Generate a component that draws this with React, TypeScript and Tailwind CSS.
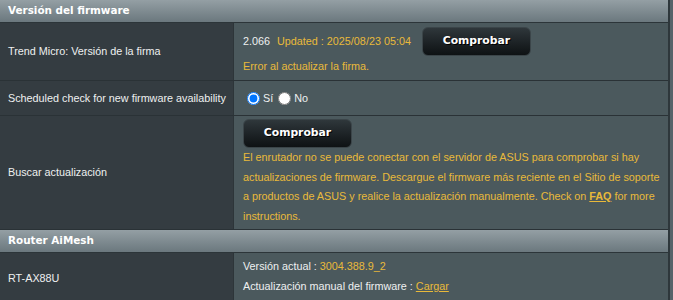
import React from 'react';

const body = "font-['Liberation_Sans',Arial,sans-serif] text-[10.8px]";
const bold = "font-['DejaVu_Sans',Verdana,sans-serif] font-bold";

const CheckButton: React.FC = () => (
  <button
    className={`${bold} w-[109px] h-[29px] rounded-[6px] border border-[#3b4549] bg-gradient-to-b from-[#2f373b] to-[#0e1214] text-[10.8px] text-white [text-shadow:1px_1px_0px_#000]`}
  >
    Comprobar
  </button>
);

const SectionHeader: React.FC<{ title: string }> = ({ title }) => (
  <div className="h-[23px] flex items-center pl-[8px] bg-gradient-to-b from-[#949fa4] to-[#6b787e] border-b border-[#2c3539]">
    <span className={`${bold} text-[10.4px] text-white`}>{title}</span>
  </div>
);

const Row: React.FC<{ label: string; children: React.ReactNode; className?: string }> = ({
  label,
  children,
  className = ''
}) => (
  <div className="flex border-b border-[#2a3236]">
    <div className="w-[234px] shrink-0 flex items-center pl-[8px] bg-[#343c41] border-r border-[#2d3539] text-[#eef0f0]">
      {label}
    </div>
    <div className={`flex-1 pl-[9px] pr-[6px] bg-[#4b595d] text-[#eef0f0] ${className}`}>{children}</div>
  </div>
);

export default function App() {
  return (
    <div className={`${body} w-[673px] h-[300px] overflow-hidden bg-[#56636a]`}>
      <div className="w-[670px] border-r-[2px] border-[#2e373b]">
        <SectionHeader title="Versión del firmware" />

        <Row label="Trend Micro: Versión de la firma" className="h-[57px] pt-[3px]">
          <div className="flex items-center h-[30px]">
            <span>2.066</span>
            <span className="ml-[7px] text-[#e9b93a]">Updated : 2025/08/23 05:04</span>
            <span className="ml-[11px]">
              <CheckButton />
            </span>
          </div>
          <div className="leading-[20px] text-[#e9b93a]">Error al actualizar la firma.</div>
        </Row>

        <Row label="Scheduled check for new firmware availability" className="h-[34px] flex items-center">
          <label className="flex items-center">
            <input type="radio" name="sched" defaultChecked className="ml-[4px] mr-[3px] w-[13px] h-[13px]" />
            <span>Sí</span>
          </label>
          <label className="flex items-center">
            <input type="radio" name="sched" className="ml-[5px] mr-[3px] w-[13px] h-[13px]" />
            <span>No</span>
          </label>
        </Row>

        <Row label="Buscar actualización" className="h-[113px] pt-[3px]">
          <CheckButton />
          <p className="leading-[19.5px] text-[#e9b93a]">
            El enrutador no se puede conectar con el servidor de ASUS para comprobar si hay actualizaciones de
            firmware. Descargue el firmware más reciente en el Sitio de soporte a productos de ASUS y realice la
            actualización manualmente. Check on <u className="font-bold">FAQ</u> for more instructions.
          </p>
        </Row>

        <SectionHeader title="Router AiMesh" />

        <Row label="RT-AX88U" className="h-[50px] pt-[4px] leading-[19.5px]">
          <div>
            Versión actual : <span className="text-[#e9b93a]">3004.388.9_2</span>
          </div>
          <div>
            Actualización manual del firmware : <span className="text-[#e9b93a] underline">Cargar</span>
          </div>
        </Row>
      </div>
    </div>
  );
}
